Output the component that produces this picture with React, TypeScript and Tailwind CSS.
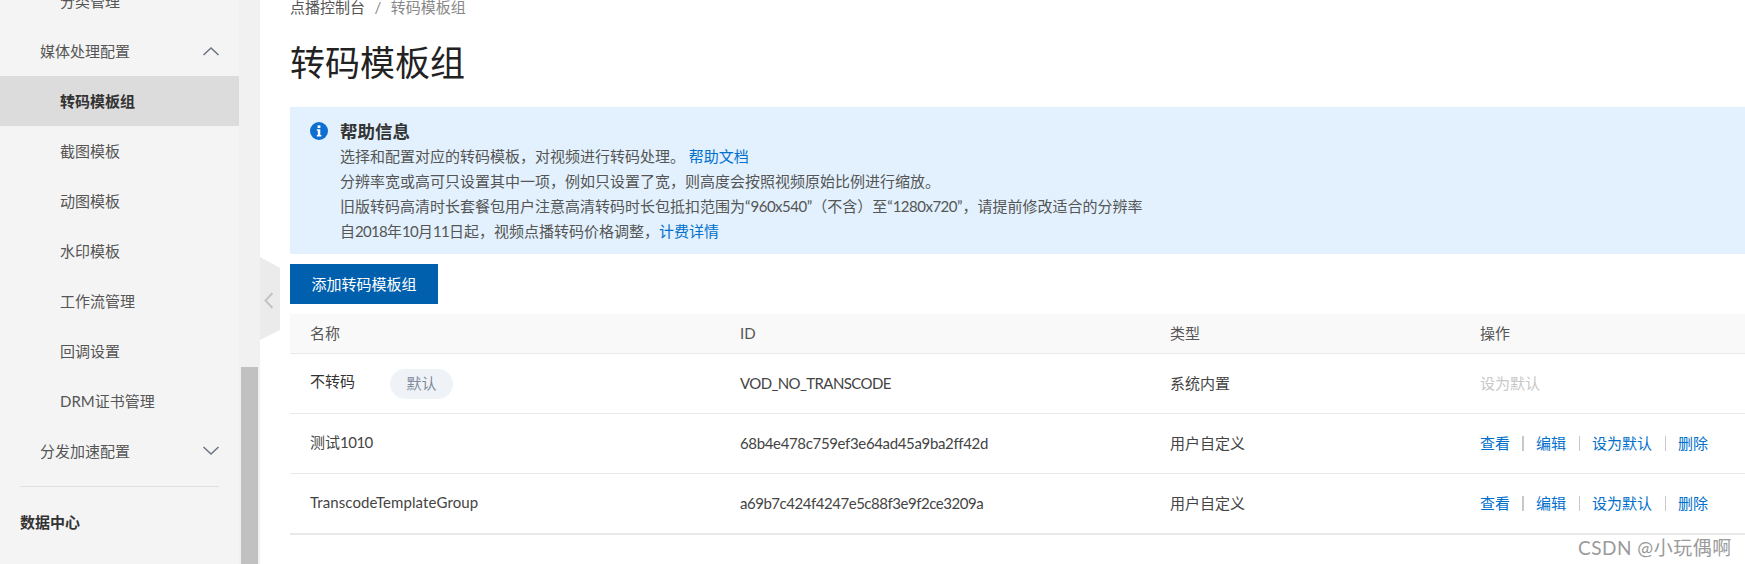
const menuItems = ["截图模板", "动图模板", "水印模板", "工作流管理", "回调设置", "DRM证书管理"];

const font = "font-['Lato','Noto_Sans_CJK_SC',sans-serif]";

const Chevron = ({ up }: { up?: boolean }) => (
  <svg width="16" height="10" viewBox="0 0 16 10" fill="none" stroke="#6b7280" strokeWidth="1.5">
    <path d={up ? "M0.5 9 L8 2 L15.5 9" : "M0.5 1 L8 8 L15.5 1"} />
  </svg>
);

const Sidebar = () => (
  <div className="flex h-full w-[260px] shrink-0 bg-[#f4f4f4]">
    <nav className="w-[239px] -mt-[24px] text-[15px] text-[#555]">
      <div className="flex h-[50px] items-center pl-[60px]">分类管理</div>
      <div className="flex h-[50px] items-center justify-between pl-[40px] pr-[20px]">
        媒体处理配置
        <Chevron up />
      </div>
      <div className="flex h-[50px] items-center bg-[#dcdcdc] pl-[60px] font-bold text-[#333]">转码模板组</div>
      {menuItems.map((item) => (
        <div key={item} className="flex h-[50px] items-center pl-[60px]">
          {item}
        </div>
      ))}
      <div className="flex h-[50px] items-center justify-between pl-[40px] pr-[20px]">
        分发加速配置
        <Chevron />
      </div>
      <div className="mx-[20px] mt-[10px] border-t border-[#e0e0e0]" />
      <div className="mt-[24px] pl-[20px] font-bold text-[#333]">数据中心</div>
    </nav>
    <div className="flex w-[21px] flex-col justify-end bg-[#f1f1f1] pl-[2px] pr-[2px]">
      <div className="h-[197px] bg-[#c1c1c1]" />
    </div>
  </div>
);

const CollapseHandle = () => (
  <svg className="absolute left-[260px] top-[257px]" width="20" height="84" viewBox="0 0 20 84">
    <polygon points="0,0 20,11 20,73 0,83" fill="#ebebeb" />
    <path d="M12.5 36 L5.5 43.5 L12.5 51" fill="none" stroke="#c4c4c4" strokeWidth="2" />
  </svg>
);

const InfoIcon = () => (
  <svg width="18" height="18" viewBox="0 0 18 18" className="mt-[3px] shrink-0">
    <circle cx="9" cy="9" r="9" fill="#0f6fd0" />
    <rect x="7.6" y="3.4" width="2.8" height="2.6" fill="#fff" />
    <path d="M6.8 7.2 H10.3 V13 H11.4 V14.5 H6.8 V13 H7.8 V8.7 H6.8 Z" fill="#fff" />
  </svg>
);

const HelpBox = () => (
  <div className="mt-[20px] flex h-[147px] bg-[#e2f1fd] pl-[20px] pt-[12px] text-[15px] leading-[25px] text-[#555]">
    <InfoIcon />
    <div className="ml-[12px]">
      <div className="text-[17.5px] font-bold text-[#333]">帮助信息</div>
      <div>
        选择和配置对应的转码模板，对视频进行转码处理。 <span className="text-[#0070cc]">帮助文档</span>
      </div>
      <div>分辨率宽或高可只设置其中一项，例如只设置了宽，则高度会按照视频原始比例进行缩放。</div>
      <div className="[text-spacing-trim:space-all]">
        旧版转码高清时长套餐包用户注意高清转码时长包抵扣范围为“<span className="tracking-[-0.5px]">960x540</span>”（不含）至“
        <span className="tracking-[-0.5px]">1280x720</span>”，请提前修改适合的分辨率
      </div>
      <div>
        自<span className="tracking-[-0.7px]">2018</span>年<span className="tracking-[-0.7px]">10</span>月
        <span className="tracking-[-0.7px]">11</span>日起，视频点播转码价格调整，<span className="text-[#0070cc]">计费详情</span>
      </div>
    </div>
  </div>
);

const RowActions = () => (
  <div className="flex items-center text-[#0070cc]">
    <span>查看</span>
    <span className="mx-[12px] h-[15px] w-[2px] bg-[#c8c8c8]" />
    <span>编辑</span>
    <span className="mx-[12.5px] h-[15px] w-px bg-[#c8c8c8]" />
    <span>设为默认</span>
    <span className="mx-[12.5px] h-[15px] w-px bg-[#c8c8c8]" />
    <span>删除</span>
  </div>
);

const rowClass = "grid h-[60px] grid-cols-[430px_430px_310px_1fr] items-center border-b border-[#e9e9e9] pl-[20px] text-[#444]";

const Table = () => (
  <div className="mt-[10px] text-[15px]">
    <div className="grid h-[40px] grid-cols-[430px_430px_310px_1fr] items-center border-b border-[#e9e9e9] bg-[#f9f9f9] pl-[20px] text-[#555]">
      <div>名称</div>
      <div>ID</div>
      <div>类型</div>
      <div>操作</div>
    </div>
    <div className={rowClass}>
      <div className="flex items-center">
        <span className="-mt-[4px] text-[#333]">不转码</span>
        <span className="ml-[35px] flex h-[30px] w-[63px] items-center justify-center rounded-full bg-[#eff3f8] text-[#7f8b9a]">默认</span>
      </div>
      <div className="tracking-[-0.6px]">VOD_NO_TRANSCODE</div>
      <div>系统内置</div>
      <div className="text-[#c8c8c8]">设为默认</div>
    </div>
    <div className={rowClass}>
      <div className="-mt-[3px]">
        测试<span className="tracking-[-0.5px]">1010</span>
      </div>
      <div className="tracking-[-0.35px]">68b4e478c759ef3e64ad45a9ba2ff42d</div>
      <div>用户自定义</div>
      <RowActions />
    </div>
    <div className={`${rowClass} h-[61px] border-b-2`}>
      <div className="-mt-[3px] tracking-[0.1px]">TranscodeTemplateGroup</div>
      <div className="tracking-[-0.47px]">a69b7c424f4247e5c88f3e9f2ce3209a</div>
      <div>用户自定义</div>
      <RowActions />
    </div>
  </div>
);

export default function App() {
  return (
    <div className={`relative flex h-[564px] w-[1745px] overflow-hidden bg-white ${font}`}>
      <Sidebar />
      <CollapseHandle />
      <main className="ml-[30px] flex-1">
        <div className="-mt-[3px] flex h-[20px] items-center text-[15px]">
          <span className="text-[#555]">点播控制台</span>
          <span className="mx-[9.5px] text-[#888]">/</span>
          <span className="text-[#888]">转码模板组</span>
        </div>
        <h1 className="mt-[20px] h-[50px] text-[35px] leading-[50px] text-[#222]">转码模板组</h1>
        <HelpBox />
        <button className="mt-[10px] h-[40px] w-[148px] bg-[#0060ae] text-[15px] text-white">添加转码模板组</button>
        <Table />
      </main>
      <div className="absolute left-[1578px] top-[534px] text-[19px] tracking-[0.5px] text-[#9a9a9a]">CSDN @小玩偶啊</div>
    </div>
  );
}
